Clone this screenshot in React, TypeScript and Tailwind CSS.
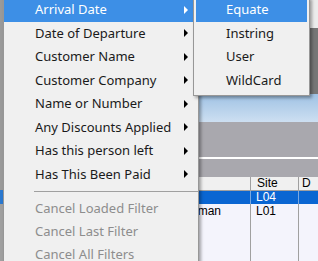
import React from "react";

const mainItems = [
  "Arrival Date",
  "Date of Departure",
  "Customer Name",
  "Customer Company",
  "Name or Number",
  "Any Discounts Applied",
  "Has this person left",
  "Has This Been Paid",
];

const cancelItems = ["Cancel Loaded Filter", "Cancel Last Filter", "Cancel All Filters"];

const subItems = ["Equate", "Instring", "User", "WildCard"];

function Arrow({ white }: { white?: boolean }) {
  return (
    <svg width="5" height="8" viewBox="0 0 5 8" className="shrink-0">
      <path d="M0 0 L4 4 L0 8 Z" fill={white ? "#ffffff" : "#000000"} />
    </svg>
  );
}

export default function App() {
  return (
    <div
      className="relative w-[318px] h-[261px] overflow-hidden bg-[#f0f0f0] text-[13px]"
      style={{ fontFamily: '"Noto Sans", "Open Sans", sans-serif' }}
    >
      {/* underlying window */}
      <div className="flex h-full">
        <div className="w-[3px] flex flex-col">
          <div className="h-[190px] bg-[#9a9a9a]" />
          <div className="h-[14px] bg-[#2b79d0]" />
          <div className="flex-1 bg-[#a0a0a0]" />
        </div>
        <div className="flex-1 flex flex-col">
          <div className="h-[28px] bg-[#ececec]" />
          <div className="h-[66px] bg-[#767676]" />
          <div className="h-[28px] bg-gradient-to-b from-[#9fc2e4] to-[#cddff1]" />
          <div className="h-[35px] bg-[#a9a8ae]" />
          <div className="h-[2px] bg-white" />
          <div className="h-[18px] bg-[#a9a8ae]" />
          <div className="flex-1 bg-[#f4f4fc] flex flex-col text-[12px] font-['Liberation_Sans',sans-serif]">
            <div className="flex h-[14px] bg-[#f0f0f0] border-b border-[#a0a0a0]">
              <div className="w-[248px] border-r border-[#a0a0a0]" />
              <div className="w-[48px] border-r border-[#a0a0a0] pl-[6px] leading-[13px] text-black">Site</div>
              <div className="flex-1 pl-[3px] leading-[13px] text-black">D</div>
            </div>
            <div className="flex h-[13px] bg-[#0a66d2] text-white leading-[13px]">
              <div className="w-[248px] border-r border-[#7aa8e0]" />
              <div className="w-[48px] border-r border-[#7aa8e0] pl-[5px]">L04</div>
              <div className="flex-1" />
            </div>
            <div className="flex flex-1 text-black leading-[14px]">
              <div className="w-[248px] border-r border-[#a0a0a0] flex justify-end pr-[29px]">oman</div>
              <div className="w-[48px] border-r border-[#a0a0a0] pl-[5px]">L01</div>
              <div className="flex-1" />
            </div>
          </div>
        </div>
      </div>

      {/* main context menu */}
      <div className="absolute left-[3px] top-[-3px] w-[196px] h-[280px] bg-[#f0f0f0] border border-[#979797] shadow-[2px_2px_3px_rgba(0,0,0,0.35)] flex flex-col">
        {mainItems.map((label, i) => (
          <div
            key={label}
            className={`flex items-center h-[23.5px] pl-[31px] pr-[9px] ${
              i === 0 ? "bg-[#3d8fe6] text-white" : "text-[#1a1a1a]"
            }`}
          >
            <span className="flex-1">{label}</span>
            <Arrow white={i === 0} />
          </div>
        ))}
        <div className="h-[11px] flex items-center pl-[30px]">
          <div className="h-px flex-1 bg-[#a0a0a0]" />
        </div>
        {cancelItems.map((label) => (
          <div key={label} className="flex items-center h-[23px] pl-[31px] text-[#8d8d8d]">
            {label}
          </div>
        ))}
      </div>

      {/* submenu */}
      <div className="absolute left-[193px] top-[-3px] w-[117px] bg-[#f0f0f0] border border-[#979797] px-[2px] pb-[3px] shadow-[2px_2px_3px_rgba(0,0,0,0.35)] flex flex-col">
        {subItems.map((label, i) => (
          <div
            key={label}
            className={`flex items-center h-[23.5px] pl-[30px] ${
              i === 0 ? "bg-[#3d8fe6] text-white" : "text-[#1a1a1a]"
            }`}
          >
            {label}
          </div>
        ))}
      </div>
    </div>
  );
}
